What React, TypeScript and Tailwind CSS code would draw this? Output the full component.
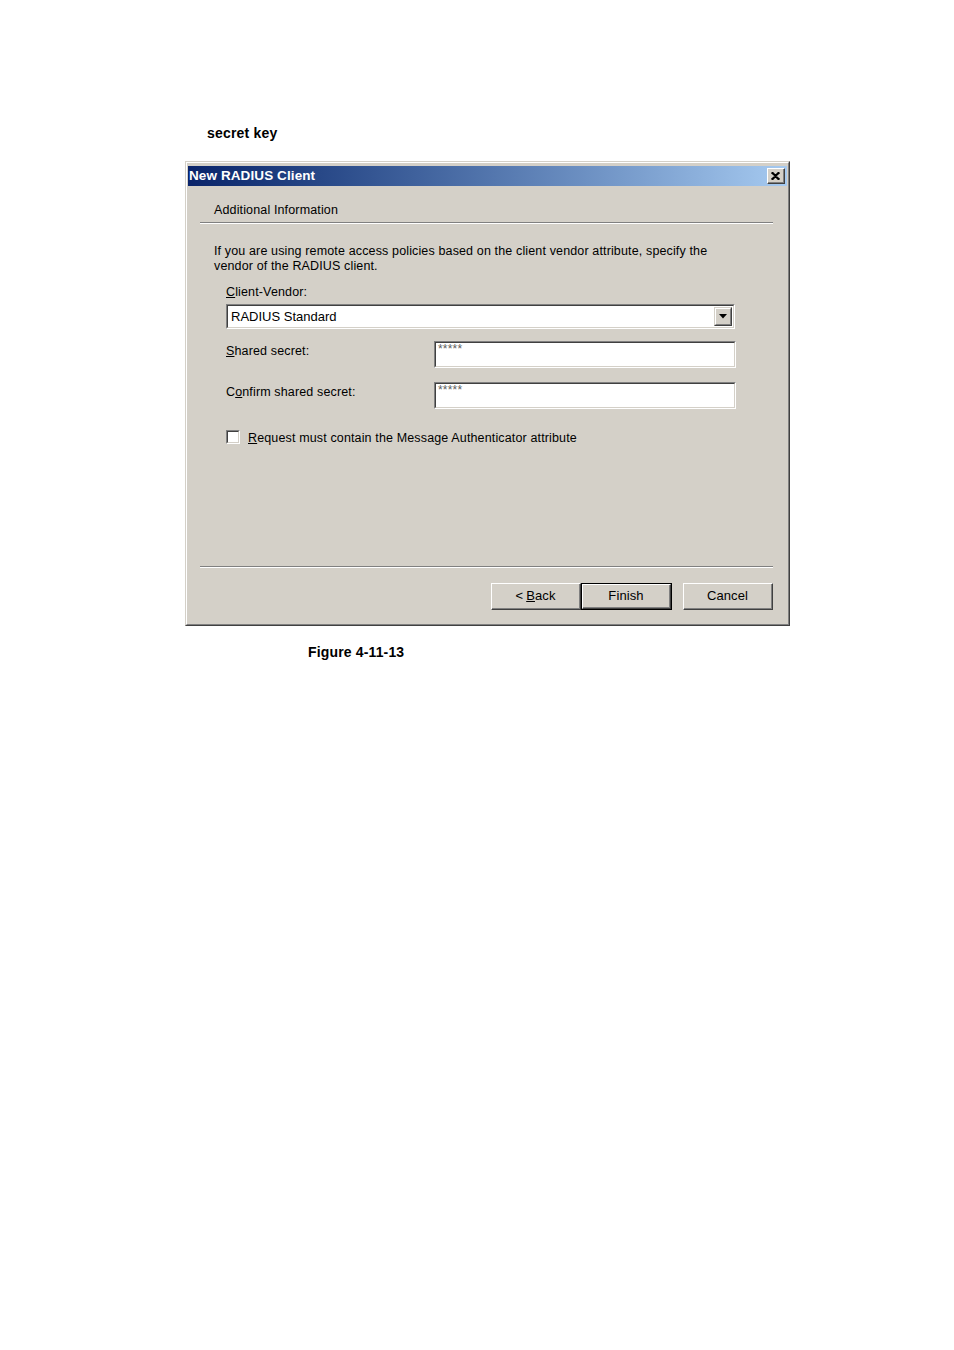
import React from "react";

const font = { fontFamily: '"Liberation Sans", Arial, sans-serif' };

const Sunken = ({ className, children }: { className: string; children?: React.ReactNode }) => (
  <div className={`border-t border-l border-[#808080] border-r border-b border-r-white border-b-white ${className}`}>
    <div className="h-full w-full border-t border-l border-[#404040] border-r border-b border-r-[#d4d0c8] border-b-[#d4d0c8] bg-white">
      {children}
    </div>
  </div>
);

const Button = ({ children, isDefault }: { children: React.ReactNode; isDefault?: boolean }) => {
  const inner = (
    <div className="h-full w-full border-t border-l border-white border-r border-b border-r-[#404040] border-b-[#404040]">
      <div className="flex h-full w-full items-center justify-center border-r border-b border-[#808080] border-t-0 border-l-0 text-[13px] tracking-[0.1px] text-black">
        {children}
      </div>
    </div>
  );
  if (isDefault) {
    return <div className="h-[27px] w-[91px] border border-black">{inner}</div>;
  }
  return <div className="h-[27px] w-[90px]">{inner}</div>;
};

function Dialog() {
  return (
    <div className="ml-[185px] mt-[20px] h-[465px] w-[605px] border-t border-l border-[#d4d0c8] border-r border-b border-r-[#404040] border-b-[#404040]">
      <div className="h-full w-full border-t border-l border-white border-r border-b border-r-[#808080] border-b-[#808080] bg-[#d4d0c8] pt-[3px] pl-[1px] pr-[1px] tracking-[0.14px]">
        {/* title bar */}
        <div className="flex h-[20px] items-center justify-between bg-gradient-to-r from-[#0a246a] to-[#a6caf0] pl-[1px] pr-[2px]">
          <span className="text-[13.5px] font-bold leading-none tracking-[0.1px] text-white">New RADIUS Client</span>
          <div className="h-[16px] w-[18px] border-t border-l border-white border-r border-b border-r-[#404040] border-b-[#404040] bg-[#d4d0c8]">
            <div className="flex h-full w-full items-center justify-center border-r border-b border-[#808080] border-t-0 border-l-0">
              <svg width="9" height="8" viewBox="0 0 9 8">
                <path d="M1 0 L4.5 3.5 L8 0 M1 8 L4.5 4.5 L8 8 M0.5 0.5 L8.5 7.5 M8.5 0.5 L0.5 7.5" stroke="#000" strokeWidth="1.6" fill="none" />
              </svg>
            </div>
          </div>
        </div>

        <div className="ml-[26px] mt-[17px] text-[12.5px] leading-[15px] text-black">Additional Information</div>
        <div className="ml-[12px] mt-[4px] h-[2px] w-[573px] border-t border-[#808080] border-b border-b-white" />

        <div className="ml-[26px] mt-[20px] text-[12.5px] leading-[15px] text-black">
          <div>If you are using remote access policies based on the client vendor attribute, specify the</div>
          <div>vendor of the RADIUS client.</div>
        </div>

        <div className="ml-[38px] mt-[11px] text-[12.5px] leading-[15px] text-black">
          <span className="underline">C</span>lient-Vendor:
        </div>
        <Sunken className="ml-[38px] mt-[4px] h-[25px] w-[509px]">
          <div className="flex h-full items-center justify-between pl-[3px] pr-[1px]">
            <span className="text-[13px] tracking-normal text-black">RADIUS Standard</span>
            <div className="h-[19px] w-[18px] border-t border-l border-[#d4d0c8] border-r border-b border-r-[#404040] border-b-[#404040] bg-[#d4d0c8]">
              <div className="flex h-full w-full items-center justify-center border-t border-l border-white border-r border-b border-r-[#808080] border-b-[#808080]">
                <svg width="8" height="5" viewBox="0 0 8 5">
                  <path d="M0 0 H8 L4 4.5 Z" fill="#000" />
                </svg>
              </div>
            </div>
          </div>
        </Sunken>

        <div className="ml-[38px] mt-[12px] flex items-start">
          <div className="w-[208px] pt-[3px] text-[12.5px] leading-[15px] text-black">
            <span className="underline">S</span>hared secret:
          </div>
          <Sunken className="h-[27px] w-[302px]">
            <div className="pl-[2px] pt-[1px] text-[12px] leading-[11px] tracking-[0.2px] text-[#606060]">*****</div>
          </Sunken>
        </div>

        <div className="ml-[38px] mt-[14px] flex items-start">
          <div className="w-[208px] pt-[3px] text-[12.5px] leading-[15px] text-black">
            C<span className="underline">o</span>nfirm shared secret:
          </div>
          <Sunken className="h-[27px] w-[302px]">
            <div className="pl-[2px] pt-[1px] text-[12px] leading-[11px] tracking-[0.2px] text-[#606060]">*****</div>
          </Sunken>
        </div>

        <div className="ml-[38px] mt-[21px] flex items-start">
          <Sunken className="h-[14px] w-[14px]" />
          <div className="ml-[8px] pt-[1px] text-[12.5px] leading-[15px] text-black">
            <span className="underline">R</span>equest must contain the Message Authenticator attribute
          </div>
        </div>

        <div className="ml-[12px] mt-[120px] h-[2px] w-[573px] border-t border-[#808080] border-b border-b-white" />

        <div className="ml-[303px] mt-[15px] flex items-start">
          <Button>
            &lt; <span className="ml-[3px] underline">B</span>ack
          </Button>
          <div>
            <Button isDefault>Finish</Button>
          </div>
          <div className="ml-[11px]">
            <Button>Cancel</Button>
          </div>
        </div>
      </div>
    </div>
  );
}

export default function App() {
  return (
    <div className="min-h-[1350px] w-[954px] bg-white pt-[125px]" style={font}>
      <div className="ml-[207px] text-[14px] font-bold leading-4 tracking-[0.2px] text-black">secret key</div>
      <Dialog />
      <div className="ml-[308px] mt-[18px] text-[14px] font-bold leading-4 tracking-[0.15px] text-black">Figure 4-11-13</div>
    </div>
  );
}
